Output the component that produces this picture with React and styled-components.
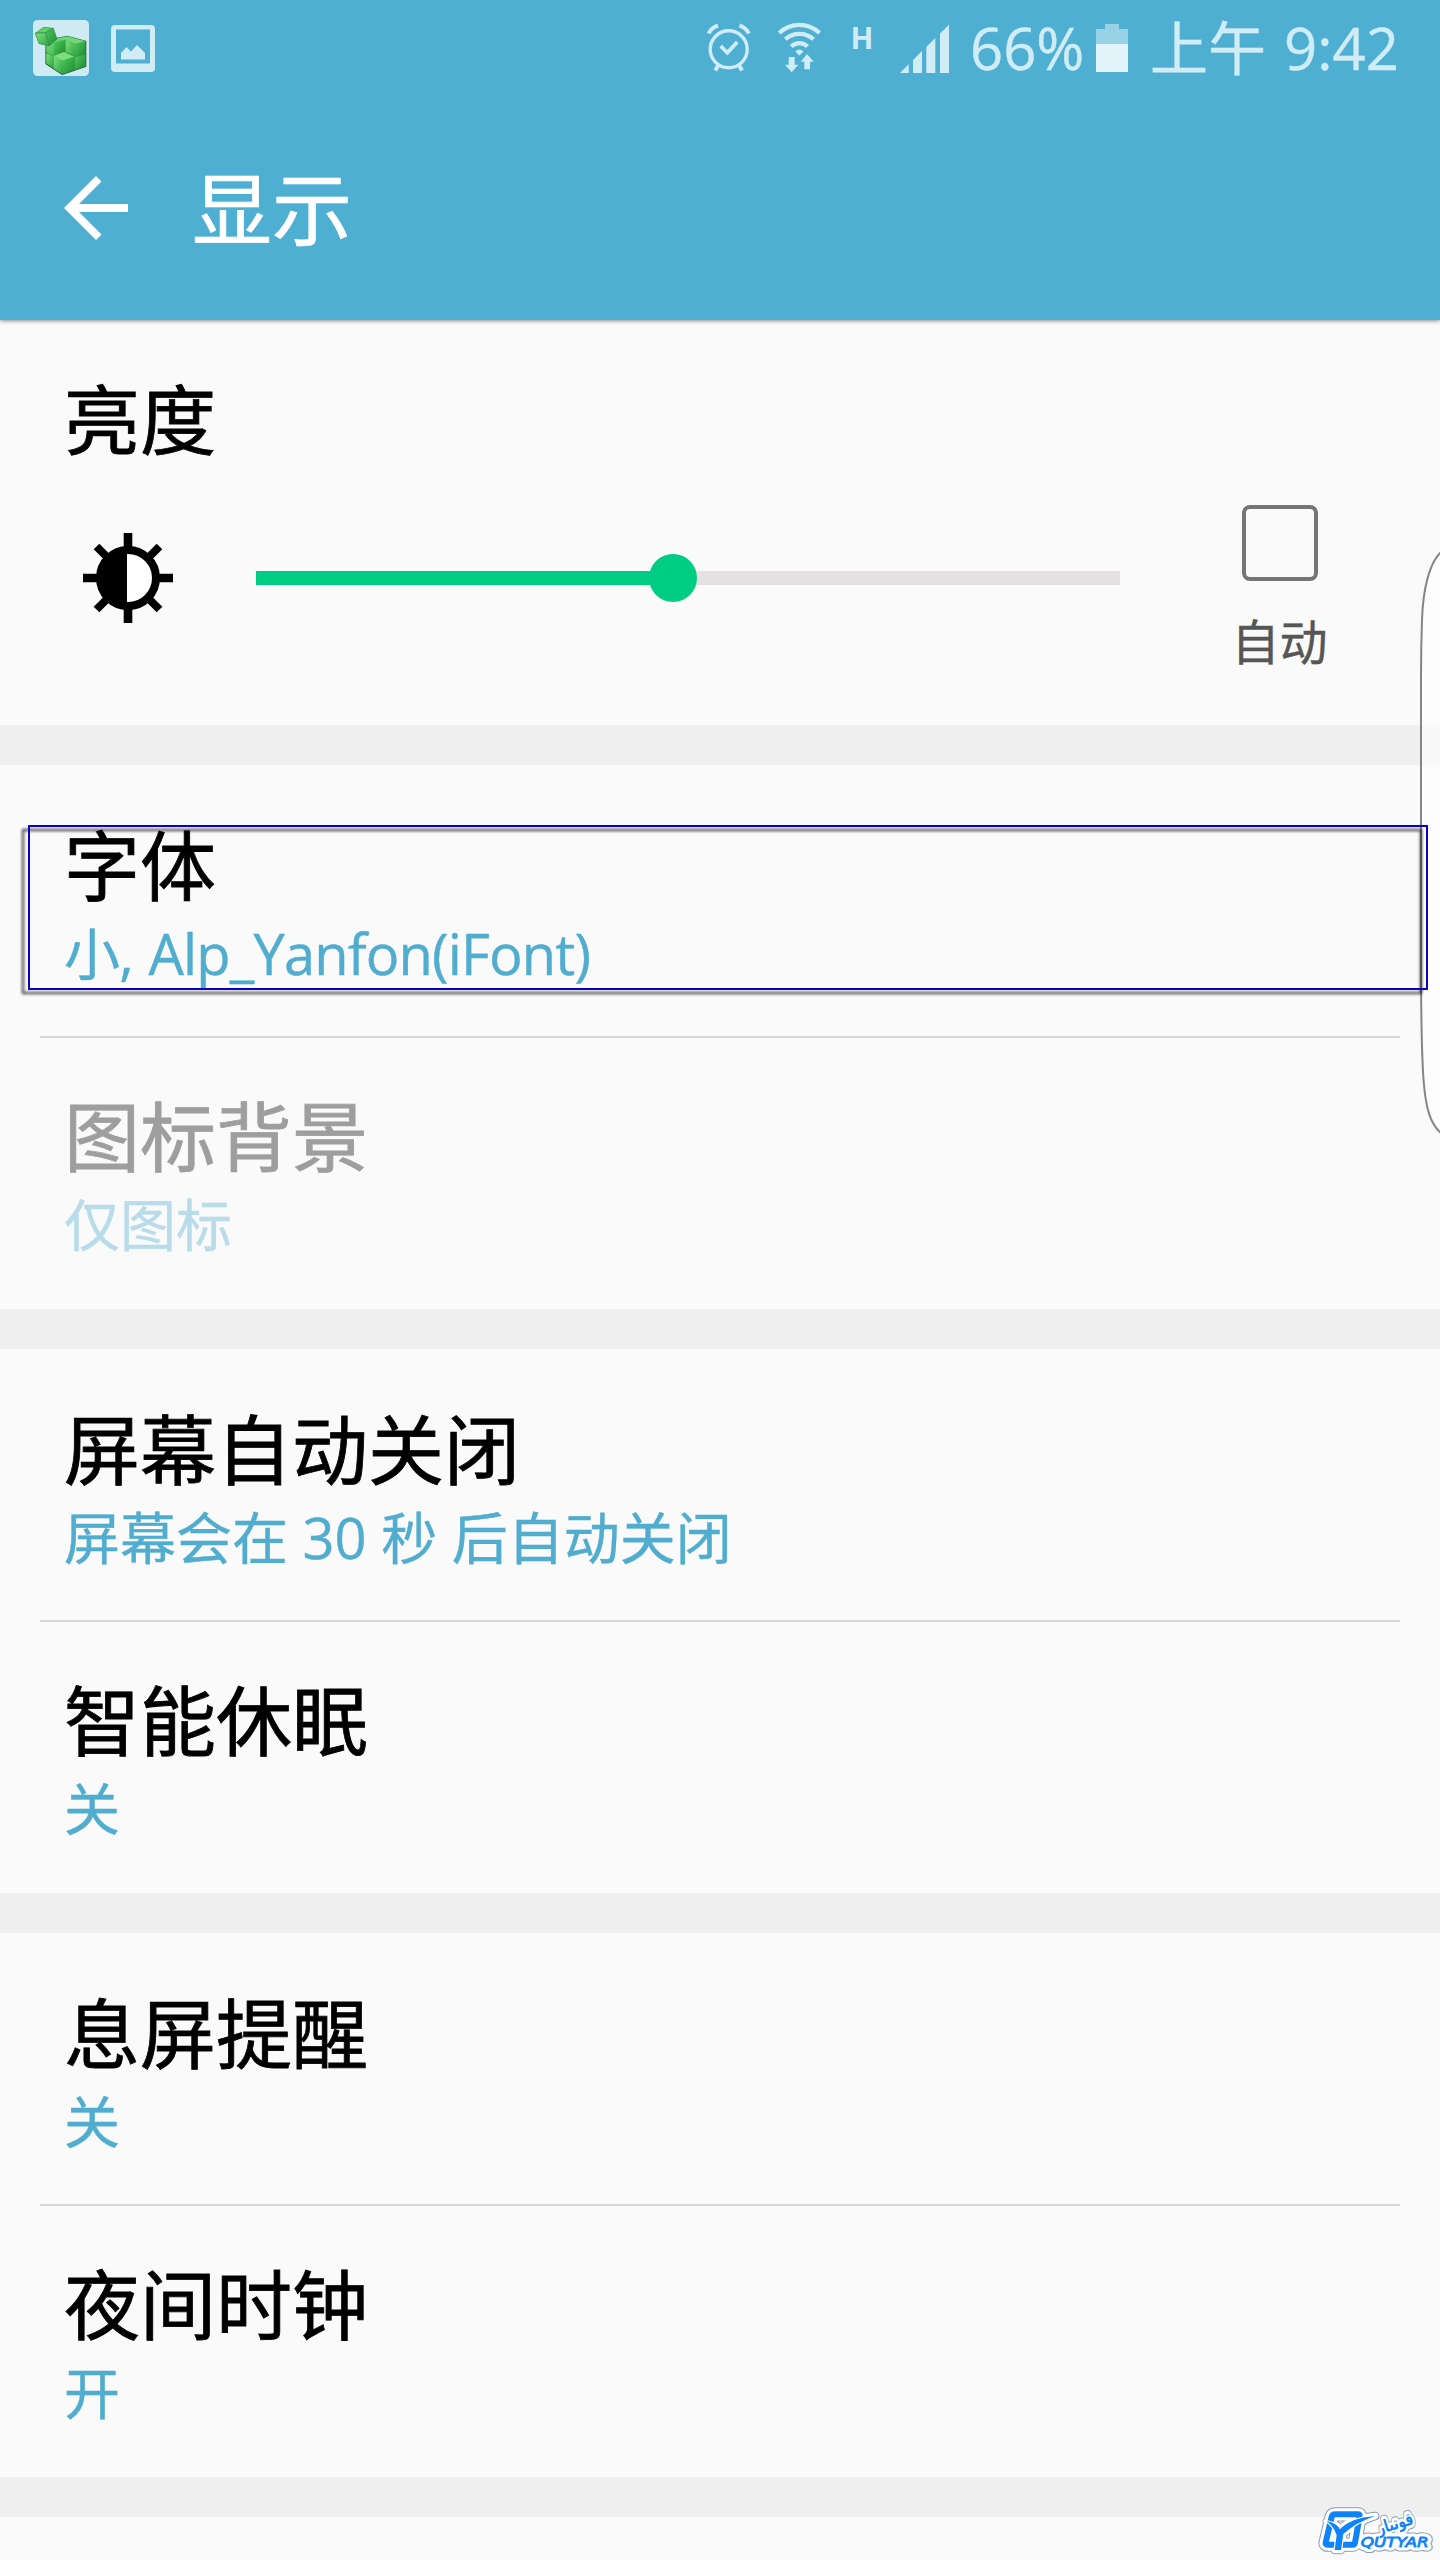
import styled, { createGlobalStyle } from "styled-components";

const groups = [
  [
    { title: "字体", value: "小, Alp_Yanfon(iFont)", marked: true },
    { title: "图标背景", value: "仅图标", disabled: true },
  ],
  [
    { title: "屏幕自动关闭", value: "屏幕会在 30 秒 后自动关闭" },
    { title: "智能休眠", value: "关" },
  ],
  [
    { title: "息屏提醒", value: "关" },
    { title: "夜间时钟", value: "开" },
  ],
];

function RegistryIcon() {
  return (
    <svg width="56" height="56" viewBox="99 60 168 168">
      <defs>
        <linearGradient id="leaf" x1="0" y1="0" x2="1" y2="1">
          <stop offset="0" stopColor="#7ee07c" />
          <stop offset="1" stopColor="#2fa544" />
        </linearGradient>
        <linearGradient id="leafDark" x1="0" y1="0" x2="1" y2="1">
          <stop offset="0" stopColor="#4fc95a" />
          <stop offset="1" stopColor="#1c8a34" />
        </linearGradient>
      </defs>
      <rect x="99" y="60" width="168" height="168" rx="14" fill="#d0eaf4" />
      <path d="M138 137L164 117L202 109L257 124V199L187 223L138 191Z" fill="#2a9c40" stroke="#2c6b4a" strokeWidth="4" strokeLinejoin="round" />
      <path d="M164 117L202 109L257 124L226 132L197 120L170 125Z" fill="#6fd873" />
      <path d="M139 137L166 118L196 121V156L162 168L139 157Z" fill="url(#leaf)" />
      <path d="M163 128L196 119V155L162 167Z" fill="url(#leafDark)" />
      <path d="M197 120L225 133V169L197 156Z" fill="url(#leaf)" />
      <path d="M225 133L256 125V162L225 169Z" fill="url(#leafDark)" />
      <path d="M224 171L256 164V198L224 209Z" fill="url(#leafDark)" />
      <path d="M139 160L160 169V204L139 190Z" fill="url(#leaf)" />
      <path d="M161 168L192 156L223 170L187 182Z" fill="#7de07c" />
      <path d="M161 168L187 182V222L161 205Z" fill="url(#leaf)" />
      <path d="M187 182L223 170V210L187 222Z" fill="url(#leafDark)" />
      <g stroke="#2f8a4a" strokeWidth="2" strokeLinejoin="round">
        <path d="M106 100L131 82L160 85L137 98Z" fill="#5fd066" />
        <path d="M106 100L137 98L148 137L117 131Z" fill="url(#leaf)" />
        <path d="M137 98L160 85L171 117L148 137Z" fill="url(#leafDark)" />
      </g>
    </svg>
  );
}

function PictureIcon() {
  return (
    <svg width="44" height="47" viewBox="0 0 44 47" fill="#d0ecf5">
      <path fillRule="evenodd" d="M4 0H40Q44 0 44 4V43Q44 47 40 47H4Q0 47 0 43V4Q0 0 4 0ZM5 4.500V38.500H39V4.500Z" />
      <path d="M10 34.500V28L15.500 22L20 26.500L26 20L34 28V34.500Z" />
    </svg>
  );
}

function AlarmIcon() {
  return (
    <svg width="46" height="50" viewBox="0 0 46 50" fill="none" stroke="#d0ecf5">
      <circle cx="22.700" cy="26.300" r="18.500" strokeWidth="3.400" />
      <path d="M14.700 23L21.300 29.800L31.300 19" strokeWidth="3.800" />
      <path d="M2.600 10.500Q5.500 4.500 12 2.500M42.800 10.500Q39.900 4.500 33.400 2.500" strokeWidth="4" />
      <path d="M12.400 42L9.400 47.500M33 42L36 47.500" strokeWidth="4" />
    </svg>
  );
}

function WifiIcon() {
  return (
    <svg width="44" height="52" viewBox="0 0 44 52" fill="#d0ecf5">
      <g fill="none" stroke="#d0ecf5" strokeWidth="4.200">
        <path d="M1.300 11A29 29 0 0 1 41.500 11" />
        <path d="M7.300 17.300A21 21 0 0 1 35.500 17.300" />
        <path d="M13.300 24.500A11.500 11.500 0 0 1 29.500 24.500" />
      </g>
      <path d="M17.300 29.500Q21.400 25.500 25.500 29.500L21.400 33.500Z" />
      <path d="M10.700 35H16.700V42.700H20.300L13.700 50.300L7 42.700H10.700Z" />
      <path d="M29 32L35.700 39.700H32V47.300H26.300V39.700H22.700Z" />
    </svg>
  );
}

function SignalIcon() {
  return (
    <svg width="49" height="49" viewBox="0 0 49 49" fill="#d0ecf5">
      <path d="M0 49L8.700 40.300V49ZM13 49V36L22 27V49ZM26.300 49V23L35.300 14V49ZM40 49V9.500L49 .7V49Z" />
    </svg>
  );
}

function BatteryIcon() {
  return (
    <svg width="32" height="48" viewBox="0 0 32 48">
      <path d="M9 0H23V5H32V20H0V5H9Z" fill="#98d2e6" />
      <path d="M0 20H32V48H0Z" fill="#e2f3fa" />
    </svg>
  );
}

function BackIcon() {
  return (
    <svg width="64" height="64" viewBox="0 0 64 64" fill="#fff">
      <path d="M0 32L32 0L37.500 5.500L15 28H64V36H15L37.500 58.500L32 64Z" />
    </svg>
  );
}

function BrightnessIcon() {
  return (
    <svg width="90" height="90" viewBox="-45 -45 90 90">
      <g stroke="#000" strokeWidth="8.600">
        <path d="M0 -45V45M-45 0H45" />
        <path d="M-31.500 -31.500L31.500 31.500M31.500 -31.500L-31.500 31.500" strokeWidth="8" />
      </g>
      <circle r="28" fill="#fff" stroke="#000" strokeWidth="8" />
      <path d="M-1 -30A30 30 0 0 0 -1 30Z" />
    </svg>
  );
}

const checkPath = "M110 184Q140 188 150 208Q180 174 256 168Q200 186 160 222L153 270H134L140 226Q132 200 110 184Z";

function LogoShapes({ color, spread = 0 }) {
  return (
    <g fill="none" stroke={color} strokeLinejoin="round">
      <path d="M136 163H205Q210 163 209 169L195 248Q194 254 188 254H112Q106 254 107 248L125 171Q127 163 136 163Z" strokeWidth={18 + spread} />
      {!spread && <path d={checkPath} stroke="#fff" strokeWidth="7" />}
      <path d={checkPath} fill={color} strokeWidth={spread} />
      <g fill={color}>
        <text x="212" y="262" fontSize="41" fontStyle="italic" fontFamily="DejaVu Sans, sans-serif" textLength="204" lengthAdjust="spacingAndGlyphs" strokeWidth={spread + 2.5}>
          QUTYAR
        </text>
        <text x="262" y="208" fontSize="52" fontWeight="700" fontFamily="DejaVu Sans, sans-serif" textLength="110" lengthAdjust="spacingAndGlyphs" transform="rotate(-17 315 195)" strokeWidth={spread}>
          قوتیار
        </text>
      </g>
    </g>
  );
}

function SettingRow({ title, value, disabled, marked }) {
  return (
    <Row>
      <RowTitle $disabled={disabled}>{title}</RowTitle>
      <RowValue $disabled={disabled} $tight={marked}>
        {value}
      </RowValue>
      {marked && <Marker />}
    </Row>
  );
}

function App() {
  return (
    <Screen>
      <GlobalStyle />
      <Header>
        <StatusBar>
          <Notices>
            <RegistryIcon />
            <PictureIcon />
          </Notices>
          <StatusIcons>
            <AlarmIcon />
            <WifiIcon />
            <Network>H</Network>
            <SignalIcon />
          </StatusIcons>
          <StatusText>66%</StatusText>
          <BatteryIcon />
          <Clock>上午 9:42</Clock>
        </StatusBar>
        <TitleBar>
          <BackIcon />
          <h1>显示</h1>
        </TitleBar>
      </Header>
      <Brightness>
        <RowTitle as="h2">亮度</RowTitle>
        <BrightnessControls>
          <BrightnessIcon />
          <Track>
            <Fill />
            <Thumb />
          </Track>
          <AutoOption>
            <CheckBox />
            <span>自动</span>
          </AutoOption>
        </BrightnessControls>
      </Brightness>
      {groups.map((rows) => (
        <Group key={rows[0].title}>
          {rows.map((row) => (
            <SettingRow key={row.title} {...row} />
          ))}
        </Group>
      ))}
      <NextGroup />
      <EdgePanel width="22" height="590" viewBox="0 0 22 590">
        <path d="M23 7C11 18 5 45 4 75C3.300 95 3 110 3 130V440C3.500 500 4 520 6 540C8 562 12 579 23 588" />
      </EdgePanel>
      <Logo width="118" height="50" viewBox="81 135 354 150">
        <LogoShapes color="#8a9cb8" spread={25} />
        <LogoShapes color="#fff" spread={19} />
        <LogoShapes color="#0f84fa" />
      </Logo>
    </Screen>
  );
}

export default App;

const GlobalStyle = createGlobalStyle`
  * {
    box-sizing: border-box;
    margin: 0;
    padding: 0;
  }
  body {
    background: #fafafa;
    font-family: "Open Sans", "Noto Sans CJK SC", sans-serif;
  }
  svg {
    display: block;
    flex-shrink: 0;
  }
`;

const Screen = styled.div`
  position: relative;
  width: 1440px;
  height: 2560px;
  overflow: hidden;
  background: #fafafa;
`;

const Header = styled.header`
  position: relative;
  height: 320px;
  background: #4fafd3;
  box-shadow: 0 1px 4px rgba(0, 0, 0, 0.45);
`;

const StatusBar = styled.div`
  display: flex;
  align-items: center;
  height: 96px;
  padding: 0 44px 0 33px;
  color: #d0ecf5;
`;

const Notices = styled.div`
  display: flex;
  align-items: center;
  gap: 22px;
  margin-right: auto;
`;

const StatusIcons = styled.div`
  display: flex;
  align-items: center;
  gap: 26.5px;
  margin-right: 21px;
`;

const Network = styled.span`
  width: 24px;
  height: 48px;
  margin: 0 -1px 0 2px;
  line-height: 27px;
  font-size: 30px;
  font-weight: 700;
`;

const StatusText = styled.span`
  width: 126px;
  line-height: 82px;
  font-size: 58px;
  white-space: nowrap;
  -webkit-text-stroke: 0.4px;
`;

const Clock = styled(StatusText)`
  width: 246px;
  margin-left: 22px;
  word-spacing: 3px;
`;

const TitleBar = styled.div`
  display: flex;
  align-items: center;
  gap: 64px;
  height: 224px;
  padding: 0 64px;
  color: #fff;
  h1 {
    font-size: 80px;
    font-weight: 400;
    line-height: 100px;
    -webkit-text-stroke: 0.7px;
  }
`;

const RowTitle = styled.h3`
  font-size: 76px;
  font-weight: 400;
  line-height: 90px;
  -webkit-text-stroke: 0.8px;
  color: ${({ $disabled }) => ($disabled ? "#9e9e9e" : "#000")};
`;

const RowValue = styled.p`
  margin-top: 4px;
  font-size: 56px;
  line-height: 76px;
  letter-spacing: ${({ $tight }) => ($tight ? "-0.85px" : "normal")};
  word-spacing: ${({ $tight }) => ($tight ? "2px" : "normal")};
  -webkit-text-stroke: 0.4px;
  color: ${({ $disabled }) => ($disabled ? "#b8dce9" : "#51adcf")};
`;

const Brightness = styled.section`
  height: 405px;
  padding: 55px 112px 0 64px;
`;

const BrightnessControls = styled.div`
  display: flex;
  align-items: flex-start;
  padding: 68px 0 0 19px;
`;

const Track = styled.div`
  display: flex;
  align-items: center;
  width: 864px;
  height: 14px;
  margin: 38px 0 0 83px;
  background: #e5e0e1;
`;

const Fill = styled.div`
  width: 417px;
  height: 14px;
  background: #00cd85;
`;

const Thumb = styled.div`
  flex-shrink: 0;
  width: 48px;
  height: 48px;
  margin-left: -24px;
  border-radius: 50%;
  background: #00cd85;
`;

const AutoOption = styled.div`
  display: flex;
  flex-direction: column;
  align-items: center;
  width: 96px;
  margin: -28px 0 0 111.5px;
  span {
    margin-top: 28px;
    font-size: 48px;
    line-height: 66px;
    color: #565656;
    -webkit-text-stroke: 0.4px;
  }
`;

const CheckBox = styled.div`
  width: 76px;
  height: 76px;
  border: 4px solid #757575;
  border-radius: 8px;
`;

const Row = styled.div`
  position: relative;
  height: 271px;
  padding: 56px 64px 0;
  & + & {
    height: 273px;
    &::before {
      content: "";
      display: block;
      height: 2px;
      margin: -56px -24px 54px;
      background: #d9d9d9;
    }
  }
`;

const Group = styled.section`
  height: 584px;
  border-top: 40px solid #efefef;
`;

const NextGroup = styled.div`
  height: 83px;
  border-top: 40px solid #efefef;
`;

const Marker = styled.div`
  position: absolute;
  z-index: 2;
  top: 60px;
  left: 28px;
  width: 1400px;
  height: 165px;
  border: 2px solid #0a00c8;
  filter: drop-shadow(-5.5px 4.5px 1.8px rgba(0, 0, 0, 0.8));
`;

const EdgePanel = styled.svg`
  position: absolute;
  top: 545px;
  right: 0;
  fill: rgba(255, 255, 255, 0.6);
  stroke: #858585;
  stroke-width: 2;
`;

const Logo = styled.svg`
  position: absolute;
  top: 2505px;
  left: 1317px;
`;
